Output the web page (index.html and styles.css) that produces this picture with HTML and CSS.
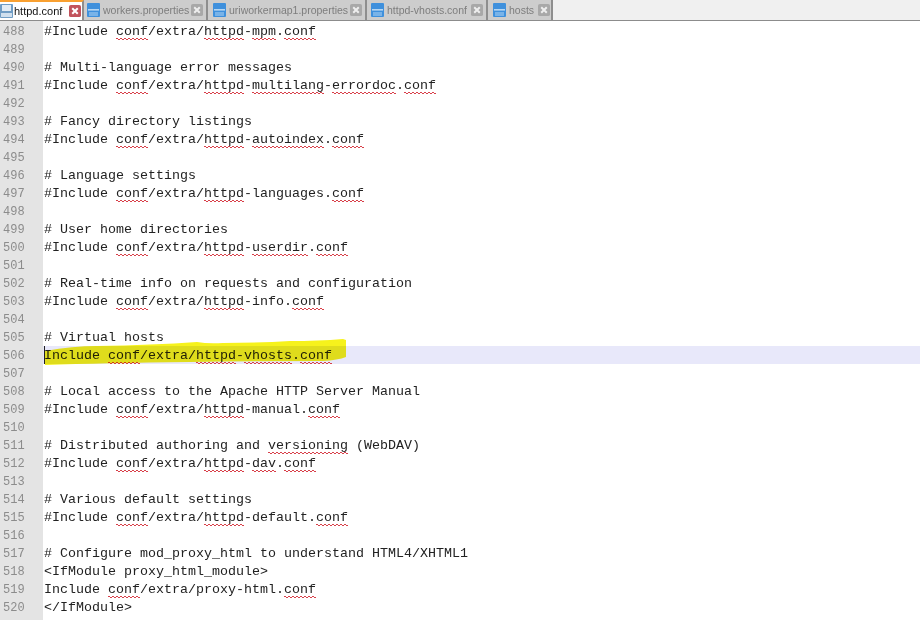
FILE: index.html
```html
<!DOCTYPE html>
<html lang="en">
<head>
  <meta charset="UTF-8" />
  <title>httpd.conf - Notepad++</title>
  <link rel="stylesheet" href="styles.css">
</head>
<body>
  <div class="tabbar">
    <div class="tab active">
      <svg class="disk" viewBox="0 0 13 14"><rect width="13" height="14" rx="1" fill="#6f9cc4"/><rect x="2" y="1" width="9" height="6" fill="#e3ecf4"/><rect x="1" y="9" width="11" height="4" fill="#cfdfee"/></svg>
      <span class="tab-name">httpd.conf</span>
      <svg class="close" viewBox="0 0 13 13"><rect width="13" height="13" rx="2" fill="#c2535c"/><path d="M3.5 3.5l6 6M9.5 3.5l-6 6" stroke="#fff" stroke-width="2.2"/></svg>
    </div>
    <div class="tab tab-workers">
      <svg class="disk" viewBox="0 0 13 14"><rect width="13" height="14" rx="1" fill="#3f90dc"/><rect x="1" y="6" width="11" height="1.6" fill="#b6d6f2"/><rect x="2" y="9" width="9" height="4" fill="#79b3e8"/></svg>
      <span class="tab-name">workers.properties</span>
      <svg class="close" viewBox="0 0 13 13"><rect width="13" height="13" rx="2" fill="#a8a8a8"/><path d="M3.5 3.5l6 6M9.5 3.5l-6 6" stroke="#eee" stroke-width="2.2"/></svg>
    </div>
    <div class="tab tab-uri">
      <svg class="disk" viewBox="0 0 13 14"><rect width="13" height="14" rx="1" fill="#3f90dc"/><rect x="1" y="6" width="11" height="1.6" fill="#b6d6f2"/><rect x="2" y="9" width="9" height="4" fill="#79b3e8"/></svg>
      <span class="tab-name">uriworkermap1.properties</span>
      <svg class="close" viewBox="0 0 13 13"><rect width="13" height="13" rx="2" fill="#a8a8a8"/><path d="M3.5 3.5l6 6M9.5 3.5l-6 6" stroke="#eee" stroke-width="2.2"/></svg>
    </div>
    <div class="tab tab-vhosts">
      <svg class="disk" viewBox="0 0 13 14"><rect width="13" height="14" rx="1" fill="#3f90dc"/><rect x="1" y="6" width="11" height="1.6" fill="#b6d6f2"/><rect x="2" y="9" width="9" height="4" fill="#79b3e8"/></svg>
      <span class="tab-name">httpd-vhosts.conf</span>
      <svg class="close" viewBox="0 0 13 13"><rect width="13" height="13" rx="2" fill="#a8a8a8"/><path d="M3.5 3.5l6 6M9.5 3.5l-6 6" stroke="#eee" stroke-width="2.2"/></svg>
    </div>
    <div class="tab tab-hosts">
      <svg class="disk" viewBox="0 0 13 14"><rect width="13" height="14" rx="1" fill="#3f90dc"/><rect x="1" y="6" width="11" height="1.6" fill="#b6d6f2"/><rect x="2" y="9" width="9" height="4" fill="#79b3e8"/></svg>
      <span class="tab-name">hosts</span>
      <svg class="close" viewBox="0 0 13 13"><rect width="13" height="13" rx="2" fill="#a8a8a8"/><path d="M3.5 3.5l6 6M9.5 3.5l-6 6" stroke="#eee" stroke-width="2.2"/></svg>
    </div>
  </div>

  <div class="editor">
    <div class="row"><span class="num">488</span><span class="code">#Include <u>conf</u>/extra/<u>httpd</u>-<u>mpm</u>.<u>conf</u></span></div>
    <div class="row"><span class="num">489</span><span class="code"></span></div>
    <div class="row"><span class="num">490</span><span class="code"># Multi-language error messages</span></div>
    <div class="row"><span class="num">491</span><span class="code">#Include <u>conf</u>/extra/<u>httpd</u>-<u>multilang</u>-<u>errordoc</u>.<u>conf</u></span></div>
    <div class="row"><span class="num">492</span><span class="code"></span></div>
    <div class="row"><span class="num">493</span><span class="code"># Fancy directory listings</span></div>
    <div class="row"><span class="num">494</span><span class="code">#Include <u>conf</u>/extra/<u>httpd</u>-<u>autoindex</u>.<u>conf</u></span></div>
    <div class="row"><span class="num">495</span><span class="code"></span></div>
    <div class="row"><span class="num">496</span><span class="code"># Language settings</span></div>
    <div class="row"><span class="num">497</span><span class="code">#Include <u>conf</u>/extra/<u>httpd</u>-languages.<u>conf</u></span></div>
    <div class="row"><span class="num">498</span><span class="code"></span></div>
    <div class="row"><span class="num">499</span><span class="code"># User home directories</span></div>
    <div class="row"><span class="num">500</span><span class="code">#Include <u>conf</u>/extra/<u>httpd</u>-<u>userdir</u>.<u>conf</u></span></div>
    <div class="row"><span class="num">501</span><span class="code"></span></div>
    <div class="row"><span class="num">502</span><span class="code"># Real-time info on requests and configuration</span></div>
    <div class="row"><span class="num">503</span><span class="code">#Include <u>conf</u>/extra/<u>httpd</u>-info.<u>conf</u></span></div>
    <div class="row"><span class="num">504</span><span class="code"></span></div>
    <div class="row"><span class="num">505</span><span class="code"># Virtual hosts</span></div>
    <div class="row current"><span class="num">506</span><span class="code"><span class="caret"></span>Include <u>conf</u>/extra/<u>httpd</u>-<u>vhosts</u>.<u>conf</u></span></div>
    <div class="row"><span class="num">507</span><span class="code"></span></div>
    <div class="row"><span class="num">508</span><span class="code"># Local access to the Apache HTTP Server Manual</span></div>
    <div class="row"><span class="num">509</span><span class="code">#Include <u>conf</u>/extra/<u>httpd</u>-manual.<u>conf</u></span></div>
    <div class="row"><span class="num">510</span><span class="code"></span></div>
    <div class="row"><span class="num">511</span><span class="code"># Distributed authoring and <u>versioning</u> (WebDAV)</span></div>
    <div class="row"><span class="num">512</span><span class="code">#Include <u>conf</u>/extra/<u>httpd</u>-<u>dav</u>.<u>conf</u></span></div>
    <div class="row"><span class="num">513</span><span class="code"></span></div>
    <div class="row"><span class="num">514</span><span class="code"># Various default settings</span></div>
    <div class="row"><span class="num">515</span><span class="code">#Include <u>conf</u>/extra/<u>httpd</u>-default.<u>conf</u></span></div>
    <div class="row"><span class="num">516</span><span class="code"></span></div>
    <div class="row"><span class="num">517</span><span class="code"># Configure mod_proxy_html to understand HTML4/XHTML1</span></div>
    <div class="row"><span class="num">518</span><span class="code">&lt;IfModule proxy_html_module&gt;</span></div>
    <div class="row"><span class="num">519</span><span class="code">Include <u>conf</u>/extra/proxy-html.<u>conf</u></span></div>
    <div class="row"><span class="num">520</span><span class="code">&lt;/IfModule&gt;</span></div>

    <!-- highlighter stroke drawn over the current line -->
    <svg class="marker" viewBox="0 0 310 32">
      <path d="M2 15 Q30 10 54 10 Q110 9 154 6 Q165 8 180 7 Q215 7 247 5 Q275 5 300 3 L303 4 L303 21 Q295 24 280 25 Q210 25 147 26 Q60 27 2 29 Z" />
    </svg>
  </div>
</body>
</html>
```

FILE: styles.css
```css
html, body {
  margin: 0;
  height: 100%;
  overflow: hidden;
}

body {
  background: #fff;
  font-family: "Liberation Mono", monospace;
}

.tabbar {
  display: flex;
  height: 20px;
  background: #f0f0f0;
  border-bottom: 1px solid #8c8c8c;
  font-family: "Liberation Sans", Arial, sans-serif;
  font-size: 10.5px;
}

.tab {
  display: flex;
  align-items: center;
  box-sizing: border-box;
  height: 20px;
  padding-right: 3px;
  background: #cdcdcd;
  border-right: 2px solid #8e8e8e;
  color: #7d7d7d;
}

.tab.active {
  width: 84px;
  padding-right: 1px;
  background: #fff;
  border-top: 2px solid #f9a030;
  color: #111;
  font-size: 11px;
}

.tab.active .tab-name {
  margin-left: 1px;
}

.tab-workers { width: 124px; padding-left: 3px; }
.tab-uri { width: 159px; padding-left: 5px; }
.tab-vhosts { width: 121px; padding-left: 4px; }
.tab-hosts { width: 65px; padding-left: 5px; padding-right: 1px; }

.disk {
  width: 13px;
  height: 14px;
  flex: none;
}

.tab-name {
  flex: 1;
  margin-left: 3px;
  white-space: nowrap;
}

.close {
  width: 12px;
  height: 12px;
  flex: none;
}

.editor {
  position: relative;
  box-sizing: border-box;
  height: 599px;
  padding-top: 1px;
  background: linear-gradient(#e4e4e4, #e4e4e4) left / 43px 100% no-repeat;
}

.row {
  display: flex;
  height: 18px;
  line-height: 20px;
  font-size: 13.33px;
  color: #222;
}

.row.current {
  background: #e8e8fa;
}

.num {
  width: 43px;
  flex: none;
  box-sizing: border-box;
  padding-left: 3px;
  background: #e4e4e4;
  color: #8c8c8c;
  font-size: 12px;
}

.code {
  position: relative;
  padding-left: 1px;
  white-space: pre;
}

/* spell check squiggle */
.code u {
  text-decoration: none;
  padding-bottom: 1px;
  background-image:
    linear-gradient(45deg, transparent 35%, #d8404a 35%, #d8404a 65%, transparent 65%),
    linear-gradient(135deg, transparent 35%, #d8404a 35%, #d8404a 65%, transparent 65%);
  background-size: 4px 2px;
  background-position: 0 100%, 2px 100%;
  background-repeat: repeat-x;
}

.caret {
  position: absolute;
  left: 1px;
  top: 0;
  width: 1px;
  height: 18px;
  background: #222;
}

.marker {
  position: absolute;
  left: 43px;
  top: 315px;
  width: 310px;
  height: 32px;
  mix-blend-mode: multiply;
}

.marker path {
  fill: #f6f21c;
}
```
